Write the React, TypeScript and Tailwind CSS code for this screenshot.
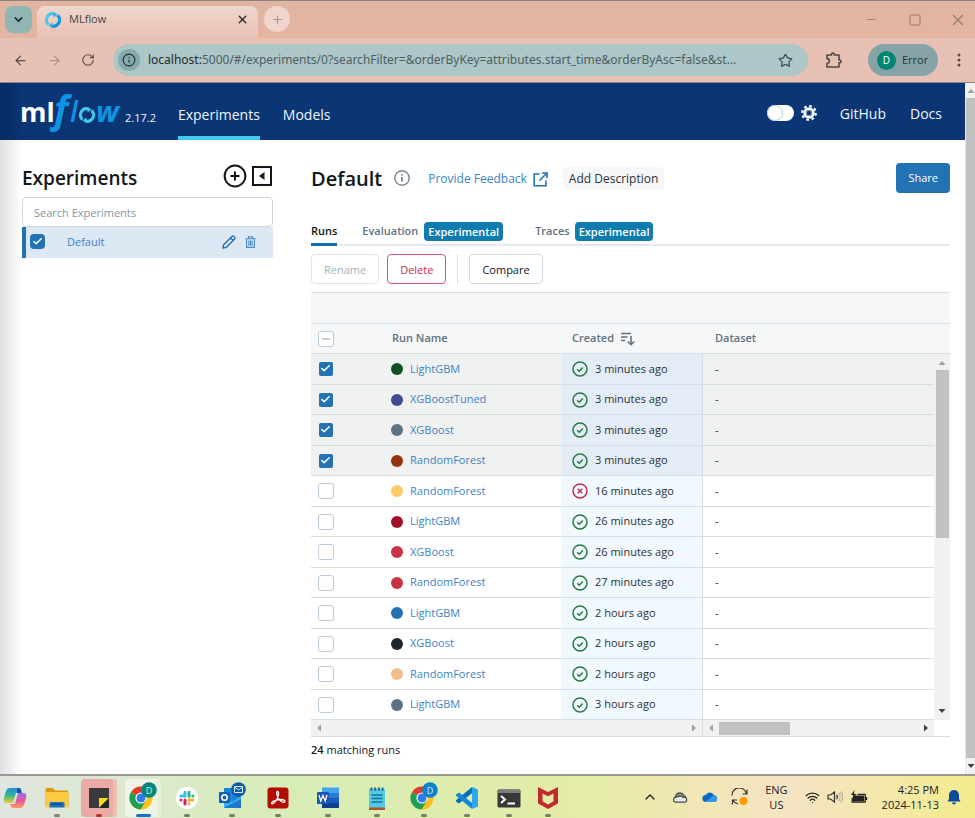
import React from "react";
import {
  ArrowLeft,
  ArrowRight,
  Check,
  ChevronDown,
  ChevronUp,
  Info,
  Minus,
  Plus,
  RotateCw,
  Star,
  Wifi,
  X,
} from "lucide-react";

type Run = { name: string; color: string; when: string; ok: boolean; checked: boolean };

const RUNS: Run[] = [
  { name: "LightGBM", color: "bg-[#0f5323]", when: "3 minutes ago", ok: true, checked: true },
  { name: "XGBoostTuned", color: "bg-[#434a93]", when: "3 minutes ago", ok: true, checked: true },
  { name: "XGBoost", color: "bg-[#5f7281]", when: "3 minutes ago", ok: true, checked: true },
  { name: "RandomForest", color: "bg-[#93320b]", when: "3 minutes ago", ok: true, checked: true },
  { name: "RandomForest", color: "bg-[#facb66]", when: "16 minutes ago", ok: false, checked: false },
  { name: "LightGBM", color: "bg-[#9e102c]", when: "26 minutes ago", ok: true, checked: false },
  { name: "XGBoost", color: "bg-[#c83243]", when: "26 minutes ago", ok: true, checked: false },
  { name: "RandomForest", color: "bg-[#c83243]", when: "27 minutes ago", ok: true, checked: false },
  { name: "LightGBM", color: "bg-[#2272b4]", when: "2 hours ago", ok: true, checked: false },
  { name: "XGBoost", color: "bg-[#1f272d]", when: "2 hours ago", ok: true, checked: false },
  { name: "RandomForest", color: "bg-[#f2be88]", when: "2 hours ago", ok: true, checked: false },
  { name: "LightGBM", color: "bg-[#5f7281]", when: "3 hours ago", ok: true, checked: false },
];

function Swirl({ className }: { className: string }) {
  return (
    <svg viewBox="0 0 16 16" className={className} fill="none" strokeWidth="3">
      <path d="M3.6 12.6A6.2 6.2 0 0 1 9.5 2" stroke="#43c9ed" />
      <path d="M12.4 3.4A6.2 6.2 0 0 1 6.5 14" stroke="#0f94e3" />
      <path d="M8.5 0l4 2.6-4 3zM7.5 16l-4-2.6 4-3z" fill="#2aafe8" stroke="none" />
    </svg>
  );
}

function BrowserChrome() {
  return (
    <header className="border-y border-[#8b8580] bg-[#e7c1b3]">
      <div className="flex h-[37px] bg-[#e2b5a2] pt-[5px]">
        <button aria-label="Search tabs" className="ml-[5px] flex h-[27px] w-[27px] items-center justify-center rounded-lg bg-[#8fb5b4]">
          <ChevronDown size={13} strokeWidth={3} className="text-[#1f2a2c]" />
        </button>
        <div className="ml-[5px] flex w-[221px] items-center rounded-t-lg bg-linear-to-b from-[#f0d6cc] to-[#e7c1b3] pb-[5px] pl-2 pr-[9px]">
          <Swirl className="h-4 w-4" />
          <span className="ml-2 flex-1 text-[11px] text-[#454746]">MLflow</span>
          <button aria-label="Close tab">
            <X size={13} strokeWidth={2.6} className="text-[#2b2b2b]" />
          </button>
        </div>
        <button aria-label="New tab" className="ml-[6px] flex h-[26px] w-[26px] items-center justify-center rounded-full bg-[#efd5cb]">
          <Plus size={13} className="text-[#a5958e]" />
        </button>
        <div className="ml-auto flex h-[27px] items-center gap-[31px] pr-[11px] text-[#94786b]">
          <button aria-label="Minimize"><Minus size={13} strokeWidth={1.5} /></button>
          <button aria-label="Maximize">
            <svg viewBox="0 0 12 12" className="h-3 w-3" fill="none" stroke="currentColor"><rect x="1" y="1" width="10" height="10" rx="1.5" /></svg>
          </button>
          <button aria-label="Close window">
            <svg viewBox="0 0 12 12" className="h-3 w-3" fill="none" stroke="currentColor" strokeWidth="1.1"><path d="M1 1l10 10M11 1L1 11" /></svg>
          </button>
        </div>
      </div>
      <div className="flex h-11 items-center">
        <button aria-label="Back" className="ml-[13px] text-[#5a504c]"><ArrowLeft size={15} /></button>
        <button aria-label="Forward" className="ml-[19px] text-[#ab9790]"><ArrowRight size={15} /></button>
        <button aria-label="Reload" className="ml-[19px] text-[#5a504c]"><RotateCw size={14} /></button>
        <div className="ml-[18px] flex h-8 min-w-0 flex-1 items-center rounded-full bg-[#adc6c7] pl-[5px] pr-[15px]">
          <button aria-label="Site information" className="flex h-[22px] w-[22px] items-center justify-center rounded-full bg-[#86aaab]">
            <Info size={14} className="text-[#1f3436]" />
          </button>
          <span className="ml-2 flex-1 truncate font-['Noto_Sans','Open_Sans',sans-serif] text-[12px] text-[#4d6062]">
            <span className="text-[#1f2a2c]">localhost:</span>5000/#/experiments/0?searchFilter=&amp;orderByKey=attributes.start_time&amp;orderByAsc=false&amp;st...
          </span>
          <button aria-label="Bookmark" className="text-[#3f4f52]"><Star size={15} /></button>
        </div>
        <button aria-label="Extensions" className="ml-[17px] text-[#4f4845]">
          <svg viewBox="0 0 18 18" className="h-[18px] w-[18px]" fill="none" stroke="currentColor" strokeWidth="1.6" strokeLinejoin="round">
            <path d="M2 4h4.5V3.4a1.4 1.4 0 0 1 2.8 0V4H14v5h.6a1.4 1.4 0 0 1 0 2.8H14V16H2v-3.6a2.4 2.4 0 0 0 0-4.8z" />
          </svg>
        </button>
        <button className="ml-[25px] flex h-8 w-[70px] items-center rounded-full bg-[#86a4a7] pl-[9px]">
          <span className="flex h-[19px] w-[19px] items-center justify-center rounded-full bg-[#008575] text-[10px] text-white">D</span>
          <span className="ml-[6px] text-[11px] text-[#2b3335]">Error</span>
        </button>
        <button aria-label="Menu" className="ml-[19px] mr-[14px]">
          <svg viewBox="0 0 4 14" className="h-[14px] w-1" fill="#544b48"><circle cx="2" cy="2" r="1.5" /><circle cx="2" cy="7" r="1.5" /><circle cx="2" cy="12" r="1.5" /></svg>
        </button>
      </div>
    </header>
  );
}

function NavBar() {
  return (
    <nav className="flex h-[57px] bg-[#0b3574] bg-linear-to-r from-[#092c63] to-[#0b3574] to-[24px] pl-[22px] pr-[23px] text-[14px] text-[#eef6fb]">
      <svg viewBox="0 0 100 57" className="h-[57px] w-[100px] overflow-visible" role="img" aria-label="mlflow" fontFamily="'Open Sans', sans-serif">
        <text x="-2" y="39" fontSize="27" fontWeight="700" fill="#fff">ml</text>
        <text x="32" y="40" fontSize="38" fontStyle="italic" fontWeight="700" fill="#0f94e3">f</text>
        <text x="48" y="39" fontSize="28" fontStyle="italic" fontWeight="600" fill="#0f94e3">l</text>
        <text x="74" y="39" fontSize="29" fontStyle="italic" fontWeight="700" fill="#0f94e3">w</text>
        <g transform="translate(57 24)" fill="none" strokeWidth="3">
          <path d="M3.6 12.6A6.2 6.2 0 0 1 9.5 2" stroke="#43c9ed" />
          <path d="M12.4 3.4A6.2 6.2 0 0 1 6.5 14" stroke="#43c9ed" />
          <path d="M8.5 0l4 2.6-4 3zM7.5 16l-4-2.6 4-3z" fill="#43c9ed" stroke="none" />
        </g>
      </svg>
      <span className="ml-[3px] mt-[26px] text-[11px] leading-[18px]">2.17.2</span>
      <a href="#experiments" className="ml-[22px] mt-5 border-b-4 border-[#43c9ed] leading-6">Experiments</a>
      <a href="#models" className="ml-[23px] mt-5 leading-6">Models</a>
      <div className="ml-auto mt-[18px] flex h-6 items-center">
        <button role="switch" aria-checked="false" aria-label="Dark mode" className="flex h-4 w-[27px] items-center rounded-full bg-white">
          <span className="h-4 w-4 rounded-full border border-[#b9cbe0] bg-white" />
        </button>
        <svg viewBox="0 0 16 16" className="ml-[7px] h-4 w-4" fill="none" stroke="#fff">
          <circle cx="8" cy="8" r="4.4" strokeWidth="2.6" />
          <circle cx="8" cy="8" r="6.8" strokeWidth="2.2" strokeDasharray="2.67 2.67" />
          <circle cx="8" cy="8" r="2.6" stroke="#7d97ba" strokeWidth="1" />
        </svg>
        <a href="#github" className="ml-[23px]">GitHub</a>
        <a href="#docs" className="ml-6">Docs</a>
      </div>
    </nav>
  );
}

function Sidebar() {
  return (
    <aside className="w-[251px] shrink-0">
      <div className="flex h-[34px] items-center pb-2">
        <h2 className="flex-1 pt-[3px] text-[19px] font-semibold leading-7 text-[#11171c]">Experiments</h2>
        <button aria-label="Create experiment">
          <svg viewBox="0 0 24 24" className="h-6 w-6" fill="none" stroke="#11171c" strokeWidth="2"><circle cx="12" cy="12" r="10.4" /><path d="M12 7.5v9M7.5 12h9" /></svg>
        </button>
        <button aria-label="Hide experiment list" className="ml-1">
          <svg viewBox="0 0 22 22" className="h-[22px] w-[22px]" fill="none" stroke="#11171c" strokeWidth="2"><path d="M2 2h18v18H2z" /><path d="M13.5 7v8L8 11z" fill="#11171c" stroke="none" /></svg>
        </button>
      </div>
      <input aria-label="Search Experiments" placeholder="Search Experiments" className="block h-[30px] w-full rounded border border-[#cbd6e0] bg-white px-[11px] pt-px text-[11px] placeholder:text-[#8396a5]" />
      <div className="flex h-[31px] items-center border-l-4 border-[#2272b4] bg-[#dce8f3] pb-px pl-1 pr-[17px] text-[#2272b4]">
        <Tick label="Default" checked round />
        <a href="#default" className="ml-[21px] flex-1 text-[11px] text-[#3d83c3]">Default</a>
        <button aria-label="Rename experiment">
          <svg viewBox="0 0 14 14" className="h-[14px] w-[14px]" fill="none" stroke="currentColor" strokeWidth="1.4" strokeLinejoin="round"><path d="M1 13l.6-3.2L10 1.4a1.3 1.3 0 0 1 1.9 0l.7.7a1.3 1.3 0 0 1 0 1.9L4.200 12.400zM8.500 3l2.600 2.600" /></svg>
        </button>
        <button aria-label="Delete experiment" className="ml-[9px]">
          <svg viewBox="0 0 11 12" className="h-3 w-[11px]" fill="none" stroke="#4b89c0" strokeWidth="1.1"><path d="M.5 2.700h10M3.500 2.500V.8h4v1.700M1.600 3v8.400h7.800V3M3.900 4.500v5.300M5.500 4.500v5.300M7.100 4.500v5.300" /></svg>
        </button>
      </div>
    </aside>
  );
}

function Tick({ label, checked, mixed, round }: { label: string; checked?: boolean; mixed?: boolean; round?: boolean }) {
  return (
    <span className="relative block h-4 w-4">
      <input
        type="checkbox"
        aria-label={label}
        defaultChecked={checked}
        className={
          checked
            ? round
              ? "block h-[15px] w-[15px] appearance-none rounded bg-[#2272b4]"
              : "block h-[14px] w-[14px] translate-x-px translate-y-px appearance-none rounded-xs bg-[#2272b4]"
            : "block h-4 w-4 appearance-none rounded-[3px] border border-[#bccbd9] bg-white"
        }
      />
      {checked && <Check size={11} strokeWidth={3.4} className="pointer-events-none absolute left-[2px] top-[2px] text-white" />}
      {mixed && <span className="pointer-events-none absolute left-1 top-[7px] h-[2px] w-2 bg-[#c3d0dc]" />}
    </span>
  );
}

function Status({ ok }: { ok: boolean }) {
  return (
    <svg viewBox="0 0 16 16" className="h-4 w-4 shrink-0" fill="none" stroke={ok ? "#277c43" : "#c82d4c"} strokeWidth="1.5">
      <circle cx="8" cy="8" r="7" />
      <path d={ok ? "M5.200 8.200l2 2 3.600-3.800" : "M5.700 5.700l4.600 4.600M10.300 5.700l-4.600 4.600"} />
    </svg>
  );
}

function Arrow({ dir, dim }: { dir: "up" | "down" | "left" | "right"; dim?: boolean }) {
  const points = { up: "0.500,6 7.500,6 4,2", down: "0.500,2 7.500,2 4,6", left: "6,0.500 6,7.500 2,4", right: "2,0.500 2,7.500 6,4" }[dir];
  return (
    <svg viewBox="0 0 8 8" className="h-2 w-2 shrink-0" fill={dim ? "#a0a0a0" : "#404040"}><polygon points={points} /></svg>
  );
}

function RunsTable() {
  return (
    <div className="mt-2 border-b border-[#d5dee7]">
      <table className="w-full table-fixed border-separate border-spacing-0 text-left text-[11px]">
        <colgroup>
          <col className="w-[80px]" />
          <col className="w-[170px]" />
          <col className="w-[142px]" />
          <col />
          <col className="w-4" />
        </colgroup>
        <thead className="bg-[#f6f7f9] text-[#5f7281]">
          <tr className="h-8"><td colSpan={5} className="border-y border-[#d5dee7]" /></tr>
          <tr className="h-[30px]">
            <th className="border-b border-[#d5dee7] pl-[7px]"><Tick label="Select all runs" mixed /></th>
            <th className="border-b border-[#d5dee7] pl-px font-semibold">Run Name</th>
            <th className="border-b border-[#d5dee7] pl-[11px] font-semibold">
              <span className="flex items-center">
                Created
                <svg viewBox="0 0 16 14" className="ml-[6px] h-[14px] w-4" fill="none" stroke="#5f7281" strokeWidth="1.6"><path d="M1 1.500h10M1 5h6.500M1 8.500h4M11 4v8.500M7.800 9.500l3.200 3.200 3.200-3.200" /></svg>
              </span>
            </th>
            <th className="border-b border-[#d5dee7] pl-3 font-semibold">Dataset</th>
            <td className="border-b border-[#d5dee7]" />
          </tr>
        </thead>
        <tbody>
          {RUNS.map((run, i) => (
            <tr key={i} className={(i % 2 === 0 ? "h-[31px] " : "h-[30px] ") + (run.checked ? "bg-[#f0f1f1]" : "bg-white")}>
              <td className="border-b border-[#d5dee7] pl-[7px]"><Tick label={"Select " + run.name} checked={run.checked} /></td>
              <td className="border-b border-[#d5dee7]">
                <span className="flex items-center">
                  <span className={"h-3 w-3 rounded-full " + run.color} />
                  <a href="#run" className="ml-[7px] text-[#3d83c3]">{run.name}</a>
                </span>
              </td>
              <td className={run.checked ? "border-b border-r border-[#d5dee7] bg-[#e4edf5] pl-[11px]" : "border-b border-r border-[#d5dee7] bg-[#f1f8fe] pl-[11px]"}>
                <span className="flex items-center gap-[7px] whitespace-nowrap text-[#2b3238]"><Status ok={run.ok} />{run.when}</span>
              </td>
              <td className="border-b border-[#d5dee7] pl-3 text-[#2b3238]">-</td>
              {i === 0 && (
                <td rowSpan={12} className="bg-[#f1f1f1] align-top">
                  <div className="flex h-[366px] flex-col items-center py-[5px]">
                    <Arrow dir="up" dim />
                    <div className="mt-[3px] h-[168px] w-[13px] bg-[#c1c1c1]" />
                    <div className="flex-1" />
                    <Arrow dir="down" />
                  </div>
                </td>
              )}
            </tr>
          ))}
        </tbody>
      </table>
      <div className="flex h-4 pr-4">
        <div className="flex w-[392px] items-center justify-between border-r border-[#d5dee7] bg-[#f1f1f1] px-1"><Arrow dir="left" dim /><Arrow dir="right" dim /></div>
        <div className="flex flex-1 items-center bg-[#f1f1f1] px-1">
          <Arrow dir="left" dim />
          <div className="ml-1 h-[13px] w-[71px] bg-[#c1c1c1]" />
          <div className="flex-1" />
          <Arrow dir="right" />
        </div>
      </div>
    </div>
  );
}

function Experiment() {
  return (
    <main className="min-w-0 flex-1">
      <div className="flex h-[30px] items-center text-[12px]">
        <h1 className="pt-[2px] text-[20px] font-semibold leading-7 text-[#11171c]">Default</h1>
        <svg viewBox="0 0 16 16" className="ml-3 h-4 w-4" fill="none" stroke="#5f7281" strokeWidth="1.200"><circle cx="8" cy="8" r="7.200" /><path d="M8 7v4.500M8 4.300v1.500" strokeWidth="1.500" /></svg>
        <a href="#feedback" className="ml-[18px] flex items-center pt-[2px] text-[#3d83c3]">
          Provide Feedback
          <svg viewBox="0 0 15 15" className="ml-[6px] h-[15px] w-[15px]" fill="none" stroke="#2272b4" strokeWidth="1.600"><path d="M6.500 2H1.200v11.800H13V8.500M9 1h5v5M14 1L6.500 8.500" /></svg>
        </a>
        <button className="ml-[15px] h-[23px] rounded bg-[#f6f7f9] px-[6px] pt-px text-[#2b3238]">Add Description</button>
        <button className="ml-auto h-[30px] rounded bg-[#2272b4] px-3 pt-px text-[11px] text-white">Share</button>
      </div>
      <div role="tablist" className="mt-[25px] flex h-7 border-b-2 border-[#e6eaf0] text-[11px] font-semibold text-[#5f7281]">
        <button role="tab" aria-selected="true" className="-mb-[2px] border-b-[3px] border-[#0e6cb5] pt-[2px] text-[#11171c]">Runs</button>
        <button role="tab" aria-selected="false" className="ml-[25px] flex items-center">Evaluation<span className="ml-[6px] rounded bg-[#0e7cae] px-[4px] leading-[19px] text-white">Experimental</span></button>
        <button role="tab" aria-selected="false" className="ml-8 flex items-center">Traces<span className="ml-[5px] rounded bg-[#0e7cae] px-[4px] leading-[19px] text-white">Experimental</span></button>
      </div>
      <div className="mt-2 flex h-[30px] text-[11px]">
        <button disabled className="rounded border border-[#dce3ea] px-3 pt-[2px] text-[#a3b1bd]">Rename</button>
        <button className="ml-2 rounded border border-[#d3566f] px-3 pt-[2px] text-[#c82d4c]">Delete</button>
        <span className="ml-[11px] mr-[11px] w-px bg-[#d8e0e8]" />
        <button className="rounded border border-[#d3dce5] px-3 pt-[2px] text-[#11171c]">Compare</button>
      </div>
      <RunsTable />
      <p className="mt-1 text-[11px] leading-[18px] text-[#11171c]"><b className="font-semibold">24</b> matching runs</p>
    </main>
  );
}

function Chrome({ badge }: { badge: string }) {
  return (
    <svg viewBox="0 0 28 28" className="h-7 w-7">
      <g transform="translate(0 4)">
        <circle cx="12" cy="12" r="11.500" fill="#fbc116" />
        <path d="M12 12L2 6.200A11.500 11.500 0 0 1 22 6.200z" fill="#e33b2e" />
        <path d="M2 6.200A11.500 11.500 0 0 0 11.500 23.500L17 14.800 12 12z" fill="#1f9d55" />
        <path d="M12 6.500h10.200l-2-3-9-1z" fill="#e33b2e" />
        <circle cx="12" cy="12" r="5.600" fill="#fff" />
        <circle cx="12" cy="12" r="4.500" fill="#2f7de9" />
      </g>
      <circle cx="20" cy="8" r="7.800" fill={badge} />
      <text x="20" y="11.500" fontSize="9" textAnchor="middle" fill="#cfe6ee">D</text>
    </svg>
  );
}

type App = { name: string; width: string; icon: React.ReactNode; mark?: string; box?: string };

const APPS: App[] = [
  {
    name: "Copilot", width: "w-[30px]",
    icon: (
      <svg viewBox="0 0 24 24" className="h-6 w-6">
        <defs>
          <linearGradient id="cpA" x1="0" y1="0" x2="0" y2="1"><stop stopColor="#1f8fe0" /><stop offset=".5" stopColor="#35b58f" /><stop offset="1" stopColor="#f2cb38" /></linearGradient>
          <linearGradient id="cpB" x1="0" y1="0" x2="0" y2="1"><stop stopColor="#9a6cf0" /><stop offset=".5" stopColor="#e0589d" /><stop offset="1" stopColor="#ff9c5a" /></linearGradient>
        </defs>
        <path d="M7 2h9l2 5h-5l-3 10H4c-3 0-4-2-3-5l2-7c1-2 2-3 4-3z" fill="url(#cpA)" />
        <path d="M17 22H9l-2-4h5l3-11h5c3 0 4 2 3 5l-2 7c-1 2-2 3-4 3z" fill="url(#cpB)" />
        <path d="M14 2h2c2 0 2 2 3 5h-5z" fill="#1750b8" />
      </svg>
    ),
  },
  {
    name: "File Explorer", width: "ml-[6px] w-[42px]", mark: "w-[6px] bg-[#7d8478]",
    icon: (
      <svg viewBox="0 0 24 24" className="h-6 w-6">
        <path d="M.5 3.500A1.500 1.500 0 0 1 2 2h6l2 2.500h12A1.500 1.500 0 0 1 23.500 6v15H.500z" fill="#d9980f" />
        <path d="M.5 6h23v14.500a1 1 0 0 1-1 1h-21a1 1 0 0 1-1-1z" fill="#fcca45" />
        <path d="M4.500 21.500v-4a1.500 1.500 0 0 1 1.500-1.500h12a1.500 1.500 0 0 1 1.500 1.500v4z" fill="#1672c4" />
        <path d="M7 18h10" stroke="#0c4a8a" strokeWidth="1.500" />
      </svg>
    ),
  },
  {
    name: "Sticky Notes", width: "w-[42px]", mark: "w-[6px] bg-[#c42b1c]", box: "bg-[#ecaaa6] shadow-[inset_-4px_0_#f0bdb5]",
    icon: (
      <svg viewBox="0 0 24 24" className="h-6 w-6"><path d="M2 2h20v20H2z" fill="#3a3a3a" /><path d="M12 12h10l-10 10z" fill="#fcdb1d" /><path d="M22 12v10H12z" fill="#262626" /></svg>
    ),
  },
  { name: "Google Chrome", width: "w-[46px]", mark: "w-[15px] bg-[#1672c4]", box: "bg-[#eff5e6] shadow-[inset_-4px_0_#e5f1d6]", icon: <Chrome badge="#0b8577" /> },
  {
    name: "Slack", width: "w-[42px]", mark: "w-[6px] bg-[#75806b]",
    icon: (
      <svg viewBox="0 0 24 24" className="h-6 w-6" fill="none" strokeWidth="3" strokeLinecap="round">
        <circle cx="12" cy="12" r="11" fill="#fff" />
        <path d="M10 6.200v4M5.800 10H10" stroke="#36c5f0" /><path d="M14 6.200v4M18 10h-.2" stroke="#2eb67d" />
        <path d="M14 14h4M14 17.800v0" stroke="#ecb22e" /><path d="M10 14v4M6 14h0" stroke="#e01e5a" />
      </svg>
    ),
  },
  {
    name: "Outlook", width: "w-[48px]", mark: "w-[6px] bg-[#75806b]",
    icon: (
      <svg viewBox="0 0 28 28" className="h-7 w-7">
        <path d="M6 6h16v20H6z" fill="#1a86d9" /><path d="M6 14l8 6 9-6v12H6z" fill="#37aef2" /><path d="M6 26l17-9v9z" fill="#1c78c9" />
        <rect x="1" y="10" width="11" height="11" rx="1" fill="#0f60b6" />
        <circle cx="6.500" cy="15.500" r="2.700" fill="none" stroke="#fff" strokeWidth="1.600" />
        <circle cx="20.500" cy="7.500" r="7.300" fill="#0b5cad" />
        <path d="M16.500 4.500h8v6h-8zM16.500 5l4 3 4-3" fill="none" stroke="#dcecf8" />
      </svg>
    ),
  },
  {
    name: "Acrobat", width: "w-[44px]", mark: "w-[6px] bg-[#75806b]",
    icon: (
      <svg viewBox="0 0 24 24" className="h-6 w-6"><rect x="1.500" y="1.500" width="21" height="21" rx="3" fill="#b30b00" /><path d="M11.500 5.500c2 0 1 5-1 8.500s-4.500 4.500-5 3.500c-.5-1.500 5-4 9-4s5 1.500 4 2.500-4-.5-6-3.500-2.500-7-1-7z" fill="none" stroke="#fff" strokeWidth="1.300" /></svg>
    ),
  },
  {
    name: "Word", width: "w-[56px]", mark: "w-[6px] bg-[#75806b]",
    icon: (
      <svg viewBox="0 0 24 24" className="h-6 w-6"><path d="M6 1.500h17v6H6z" fill="#41a5ee" /><path d="M6 7h17v5H6z" fill="#2b7cd3" /><path d="M6 12h17v5H6z" fill="#185abd" /><path d="M6 17h17v5H6z" fill="#103f91" /><rect x="1" y="6" width="12" height="12" rx="1" fill="#1a55b4" /><path d="M3 9l1.800 6L7 9.500 9.200 15 11 9" fill="none" stroke="#fff" strokeWidth="1.300" /></svg>
    ),
  },
  {
    name: "Notepad", width: "w-[42px]", mark: "w-[6px] bg-[#75806b]",
    icon: (
      <svg viewBox="0 0 24 24" className="h-6 w-6"><path d="M4 3h16v19H4z" fill="#53c8e8" /><path d="M4 21.500h16V24H4z" fill="#a85a20" /><path d="M6.500 9h11M6.500 12.500h11M6.500 16h11" stroke="#12728f" strokeWidth="1.300" /><path d="M5.500 3h13" stroke="#1c6480" strokeWidth="3" strokeDasharray="2 1.700" /></svg>
    ),
  },
  { name: "Google Chrome", width: "w-[52px]", mark: "w-[6px] bg-[#75806b]", icon: <Chrome badge="#0b84cc" /> },
  {
    name: "Visual Studio Code", width: "w-[34px]", mark: "w-[6px] bg-[#75806b]",
    icon: (
      <svg viewBox="0 0 24 24" className="h-6 w-6"><path d="M17 1l6 2.500v17L17 23z" fill="#2aa8f2" /><path d="M17 1v6.200L4 17.500 1 15.500v-1.300z" fill="#0b6fb8" /><path d="M17 23v-6.200L4 6.500 1 8.500v1.300z" fill="#1489d6" /></svg>
    ),
  },
  {
    name: "Terminal", width: "w-[50px]", mark: "w-[6px] bg-[#75806b]",
    icon: (
      <svg viewBox="0 0 24 24" className="h-6 w-6"><rect x=".5" y="3.500" width="23" height="18" rx="1.500" fill="#383838" /><path d="M.5 7V5A1.500 1.500 0 0 1 2 3.500h20A1.500 1.500 0 0 1 23.500 5v2z" fill="#7e7e7e" /><path d="M4 10l4 3.500L4 17M10.500 17.500h7.500" fill="none" stroke="#fff" strokeWidth="2" /></svg>
    ),
  },
  {
    name: "McAfee", width: "w-7", mark: "w-[6px] bg-[#75806b]",
    icon: (
      <svg viewBox="0 0 24 24" className="h-6 w-6"><path d="M2 1l10 5 10-5v16.500L12 23 2 17.500zM6.500 7.500v7.800L12 18.500l5.500-3.200V7.500L12 10.300z" fill="#c02a2c" fillRule="evenodd" /></svg>
    ),
  },
];

function Taskbar() {
  return (
    <footer className="flex h-[44px] shrink-0 border-t-2 border-[#969a90] bg-linear-to-r from-[#dfe5e0] via-[#d8edb6] via-30% to-[#f3eb8c] text-[12px]">
      <div className="flex">
        {APPS.map((app, i) => (
          <button key={i} aria-label={app.name} className={"flex justify-center pt-[3px] " + app.width}>
            <span className={"flex h-[38px] w-9 shrink-0 flex-col items-center justify-end rounded " + (app.box || "")}>
              {app.icon}
              <span className={"mt-[4px] h-[3px] shrink-0 rounded-full " + (app.mark || "")} />
            </span>
          </button>
        ))}
      </div>
      <div className="flex flex-1 items-center justify-end bg-linear-to-r from-transparent via-[#f5e4c4] via-55% to-[#f3eb8c] pr-[14px] text-[#222]">
        <ChevronUp size={16} strokeWidth={2} />
        <svg viewBox="0 0 16 12" className="ml-[14px] h-3 w-4" stroke="#4a4a48" strokeWidth="1.200"><path d="M4 9a3 3 0 0 1-.2-4A4.300 4.300 0 0 1 11.800 4.300 3.300 3.300 0 0 1 12.500 10z" fill="#8f8f8b" /><path d="M3.500 11.200a2.500 2.500 0 0 1 0-4.900l2.500-.5a4 4 0 0 1 5 .6 2.500 2.500 0 0 1 2 4.800z" fill="#ececea" /></svg>
        <svg viewBox="0 0 16 12" className="ml-[14px] h-3 w-4"><path d="M4 11a3.500 3.500 0 0 1-.2-7A4.300 4.300 0 0 1 11.800 4.300 3.400 3.400 0 0 1 12.500 11z" fill="#0c66c2" /><path d="M3 11l7-5.500 2-.8A3.200 3.200 0 0 1 12.500 11z" fill="#2b9cec" /></svg>
        <svg viewBox="0 0 18 18" className="ml-[13px] h-[18px] w-[18px]" fill="none" stroke="#333" strokeWidth="1.200"><path d="M1 7.500A7.300 7.300 0 0 1 15.500 6M16 1.500V6h-4.500M1.500 16.500V12H6M2 12.500a7 7 0 0 0 5 3.500" /><circle cx="12.500" cy="13" r="4" fill="#ff9800" stroke="none" /></svg>
        <span className="ml-4 text-center text-[11px] leading-[15px]">ENG<br />US</span>
        <Wifi size={15} className="ml-[17px]" />
        <svg viewBox="0 0 16 14" className="ml-[7px] h-[14px] w-4" fill="none" stroke="#333" strokeWidth="1.200"><path d="M1 5h2.500L7.500 2v10L3.500 9H1zM9.500 5a3 3 0 0 1 0 4" /><path d="M11.500 3a6 6 0 0 1 0 8M13.500 1.500a8 8 0 0 1 0 11" stroke="#bdb29c" /></svg>
        <svg viewBox="0 0 18 14" className="ml-[7px] h-[14px] w-[18px]" fill="#222"><rect x="3" y="5.500" width="11" height="6" /><path d="M2.200 8v4.200h13V4.300H7.500M16.500 7v3" fill="none" stroke="#222" strokeWidth="1.300" /><path d="M4.500 0L1 5h2.500L2 9l4.500-5H4z" /></svg>
        <span className="ml-[14px] text-right text-[11px] leading-[15px]">4:25 PM<br />2024-11-13</span>
        <svg viewBox="0 0 14 16" className="ml-2 h-4 w-[14px]" fill="#0d4ba0"><path d="M7 1a5 5 0 0 1 5 5v4l1.500 2.500H.5L2 10V6a5 5 0 0 1 5-5zM5 13.500h4a2 2 0 0 1-4 0z" /></svg>
      </div>
    </footer>
  );
}

export default function App() {
  return (
    <div className="flex min-h-screen flex-col bg-white font-['Open_Sans','Noto_Sans',sans-serif]">
      <BrowserChrome />
      <div className="flex flex-1">
        <div className="flex min-w-0 flex-1 flex-col">
          <NavBar />
          <div className="flex flex-1 gap-[38px] bg-linear-to-r from-[#e0e0e0] to-white to-[22px] pl-[22px] pr-[15px] pt-[23px]">
            <Sidebar />
            <Experiment />
          </div>
        </div>
        <div className="flex w-[10px] flex-col items-end overflow-hidden border-l border-[#e8e8e8] bg-[#f1f1f1] py-1">
          <Arrow dir="up" dim />
          <div className="mt-[3px] w-[9px] flex-1 bg-[#c1c1c1]" />
          <div className="mt-1 flex"><Arrow dir="down" /></div>
        </div>
      </div>
      <Taskbar />
    </div>
  );
}
